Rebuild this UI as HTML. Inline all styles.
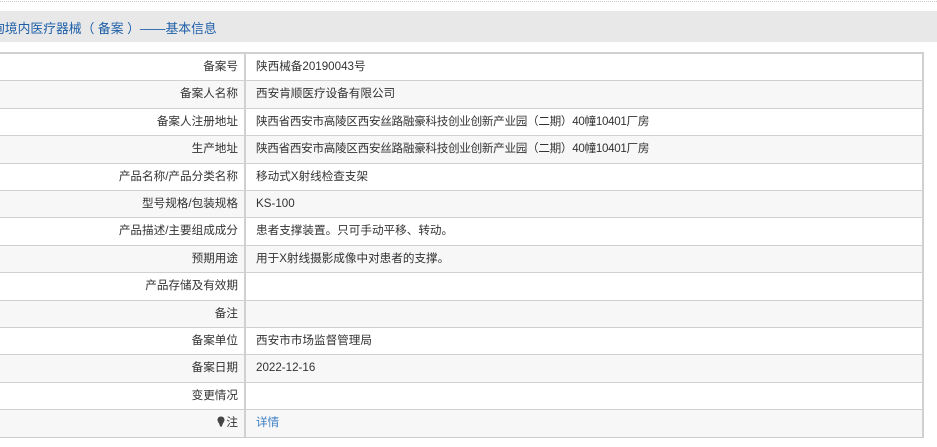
<!DOCTYPE html>
<html><head><meta charset="utf-8"><style>
body{margin:0;width:937px;height:447px;overflow:hidden;background:#fff;font-family:"Liberation Sans","Noto Sans CJK SC",sans-serif;position:relative}
.dot{position:absolute;top:1px;left:0;width:937px;border-top:1px dotted #ccc}
.hd{position:absolute;top:11px;left:0;width:937px;height:31px;background:#e8e8e8}
.hd span{position:absolute;left:-8px;top:7px;font-size:12.8px;color:#1e5fa8;white-space:nowrap}
.tb{position:absolute;left:-2px;top:52px;width:926px;border:1px solid #ccc;border-top:2px solid #d0d0d0;border-right:2px solid #d0d0d0;box-sizing:border-box}
.r{position:relative;height:27.4px;border-bottom:1px solid #d0d0d0;box-sizing:border-box;font-size:11.6px;color:#333}
.r:nth-child(even){background:#f7f7f7}
.r:last-child{border-bottom:none}
.l{position:absolute;left:0;width:247px;height:100%;border-right:2px solid #d0d0d0;box-sizing:border-box;text-align:right;padding-right:6px;line-height:26px}
.v{position:absolute;left:257px;line-height:26px;white-space:nowrap}
.n{letter-spacing:-0.3px}
a{color:#3c7fc7;text-decoration:none}
</style></head><body>
<div class="dot"></div>
<div class="hd"><span>询境内医疗器械（ 备案 ）——基本信息</span></div>
<div class="tb">
<div class="r"><div class="l">备案号</div><div class="v">陕西械备20190043号</div></div>
<div class="r"><div class="l">备案人名称</div><div class="v">西安肯顺医疗设备有限公司</div></div>
<div class="r"><div class="l">备案人注册地址</div><div class="v n">陕西省西安市高陵区西安丝路融豪科技创业创新产业园（二期）40幢10401厂房</div></div>
<div class="r"><div class="l">生产地址</div><div class="v n">陕西省西安市高陵区西安丝路融豪科技创业创新产业园（二期）40幢10401厂房</div></div>
<div class="r"><div class="l">产品名称/产品分类名称</div><div class="v">移动式X射线检查支架</div></div>
<div class="r"><div class="l">型号规格/包装规格</div><div class="v">KS-100</div></div>
<div class="r"><div class="l">产品描述/主要组成成分</div><div class="v">患者支撑装置。只可手动平移、转动。</div></div>
<div class="r"><div class="l">预期用途</div><div class="v">用于X射线摄影成像中对患者的支撑。</div></div>
<div class="r"><div class="l">产品存储及有效期</div><div class="v"></div></div>
<div class="r"><div class="l">备注</div><div class="v"></div></div>
<div class="r"><div class="l">备案单位</div><div class="v">西安市市场监督管理局</div></div>
<div class="r"><div class="l">备案日期</div><div class="v">2022-12-16</div></div>
<div class="r"><div class="l">变更情况</div><div class="v"></div></div>
<div class="r"><div class="l"><svg width="8" height="11" viewBox="0 0 8 11" style="vertical-align:-1px;margin-right:1px"><path d="M4 0.5C1.8 0.5 0.5 2 0.5 4C0.5 6 2.5 7 3 10.5L5 10.5C5.5 7 7.5 6 7.5 4C7.5 2 6.2 0.5 4 0.5Z" fill="#444"/></svg>注</div><div class="v"><a>详情</a></div></div>
</div>
</body></html>
